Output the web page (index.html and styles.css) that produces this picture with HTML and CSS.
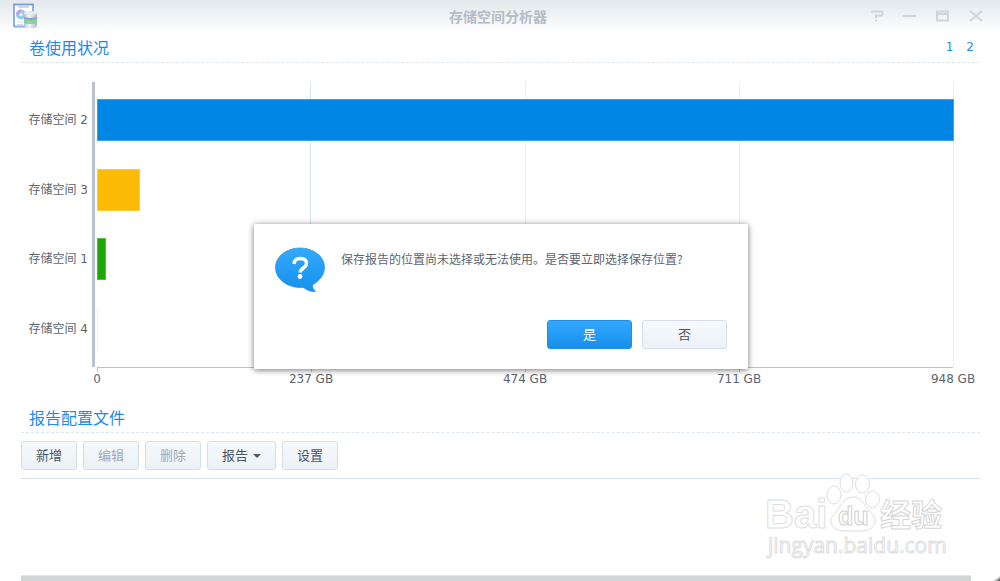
FILE: index.html
```html
<!DOCTYPE html>
<html lang="zh-CN">
<head>
<meta charset="utf-8">
<title>存储空间分析器</title>
<link rel="stylesheet" href="styles.css">
</head>
<body>
<div class="window">
  <header class="titlebar">
    <svg class="app-icon" viewBox="0 0 26 26" aria-hidden="true">
      <defs>
        <linearGradient id="disk" x1="0" x2="1" y1="0" y2="0"><stop offset="0" stop-color="#b9c3cd"/><stop offset=".4" stop-color="#f4f6f8"/><stop offset="1" stop-color="#aeb8c2"/></linearGradient>
      </defs>
      <rect x="1" y="1" width="19" height="22" fill="#fff"/>
      <path d="M1 1v23M20 1v20M1 23.500h19" fill="none" stroke="#8fb0e2" stroke-width="2"/>
      <path d="M0 1.500h21" stroke="#7aa0dc" stroke-width="2"/>
      <path d="M5 4h11" stroke="#c9ced6" stroke-width="1.500"/>
      <circle cx="8" cy="11.500" r="5" fill="#8ccdf2"/>
      <path d="M8 11.500H3A5 5 0 0 1 8 6.500z" fill="#c09ae6"/>
      <circle cx="8" cy="11.500" r="1.500" fill="#fff"/>
      <path d="M4 19h6M4 21.500h6" stroke="#d5d9df"/>
      <path d="M11 10v13c0 3 13 3 13 0V10z" fill="url(#disk)"/>
      <ellipse cx="17.500" cy="10" rx="6.500" ry="2" fill="#e8ecef"/>
      <path d="M11 14q6.500 2 13 0v2q-6.500 2-13 0z" fill="#879bd6"/>
      <path d="M11 16q6.500 2 13 0v2.500q-6.500 2-13 0z" fill="#97d06c"/>
      <path d="M11 18.500q6.500 2 13 0v1.500q-6.500 2-13 0z" fill="#6fc7e8"/>
    </svg>
    <h1 class="title">存储空间分析器</h1>
    <div class="controls">
      <button class="control" aria-label="帮助"><svg viewBox="0 0 14 14"><path d="M1 2.500h10q1.500 0 1.500 2t-1.500 2H6v2.500M6 10.500v2"/></svg></button>
      <button class="control" aria-label="最小化"><svg viewBox="0 0 14 14"><path d="M0 7h13"/></svg></button>
      <button class="control" aria-label="最大化"><svg viewBox="0 0 14 14"><path d="M1 2.500h11v9H1zM1 5h11"/></svg></button>
      <button class="control" aria-label="关闭"><svg viewBox="0 0 14 14"><path d="M1 2l12 10M13 2L1 12"/></svg></button>
    </div>
  </header>
  <main class="content">
    <section class="usage">
      <div class="section-head">
        <h2 class="section-title">卷使用状况</h2>
        <nav class="pager"><a href="#p1">1</a><a href="#p2">2</a></nav>
      </div>
      <div class="chart">
        <div class="y-labels"><span>存储空间 2</span><span>存储空间 3</span><span>存储空间 1</span><span>存储空间 4</span></div>
        <div class="plot">
          <div class="grid-lines"><i></i><i></i><i></i><i></i></div>
          <div class="bars">
            <div class="bar blue" style="width:100%"></div>
            <div class="bar yellow" style="width:5%"></div>
            <div class="bar green" style="width:1%"></div>
            <div class="bar pink" style="width:0.1%"></div>
          </div>
        </div>
        <div class="x-axis">
          <div class="x-labels"><span>0</span><span>237 GB</span><span>474 GB</span><span>711 GB</span><span>948 GB</span></div>
        </div>
      </div>
    </section>
    <section class="profiles">
      <div class="section-head">
        <h2 class="section-title">报告配置文件</h2>
      </div>
      <div class="toolbar">
        <button class="btn">新增</button>
        <button class="btn" disabled>编辑</button>
        <button class="btn" disabled>删除</button>
        <button class="btn">报告<span class="caret"></span></button>
        <button class="btn">设置</button>
      </div>
    </section>
    <div class="scroll-edge"></div>
  </main>
  <div class="dialog" role="dialog" aria-labelledby="message">
    <div class="dialog-body">
      <svg class="bubble" viewBox="0 0 52 46" aria-hidden="true">
        <defs><linearGradient id="blue" x1="0" x2="0" y1="0" y2="1"><stop offset="0" stop-color="#34a9ff"/><stop offset="1" stop-color="#1690ea"/></linearGradient></defs>
        <path d="M26 1C39.500 1 50.500 9.500 50.500 20.500c0 7-4.500 13-12 17.500 0 3 1 4.500 3 6.500-5 .5-8.500-1.500-12-4C14 41.500 1.500 32.500 1.500 20.500 1.500 9.500 12.500 1 26 1z" fill="url(#blue)" stroke="#2390e2" stroke-width=".7"/>
        <path d="M20 17c.3-4 2.700-5.500 6.300-5.500 3.700 0 6.200 1.800 6.200 5 0 4.500-6.300 4.500-6.300 9" fill="none" stroke="#fff" stroke-width="3.400"/>
        <circle cx="26" cy="29.500" r="2.400" fill="#fff"/>
      </svg>
      <p class="message" id="message">保存报告的位置尚未选择或无法使用。是否要立即选择保存位置?</p>
    </div>
    <div class="dialog-actions">
      <button class="btn primary">是</button>
      <button class="btn">否</button>
    </div>
  </div>
  <svg class="watermark" viewBox="0 0 190 100" role="img" aria-label="Baidu 经验 jingyan.baidu.com">
    <g class="mark">
      <ellipse cx="74" cy="30" rx="7" ry="9"/>
      <ellipse cx="86.500" cy="18" rx="6.500" ry="9"/>
      <ellipse cx="102.500" cy="19" rx="7" ry="9"/>
      <ellipse cx="112.500" cy="34.500" rx="7" ry="8.500"/>
      <path d="M93 32c7 0 10 5 14 11 5 6 9 9 8 14-2 10-12 9-22 9s-20 1-22-9c-1-5 4-8 8-14 4-6 7-11 14-11z"/>
      <text class="wm-latin" x="5" y="63">Bai</text>
      <text class="wm-du" x="78" y="60">du</text>
      <text class="wm-cjk" x="120" y="61">经验</text>
      <text class="wm-url" x="8" y="88">jingyan.baidu.com</text>
    </g>
  </svg>
  <div class="corner"></div>
</div>
</body>
</html>
```
FILE: styles.css
```css
* { box-sizing: border-box; }
html, body { height: 100%; }
body {
  margin: 0;
  background: #fff;
  color: #5c656e;
  font: 12px/18px "DejaVu Sans", "Noto Sans CJK SC", sans-serif;
  overflow: hidden;
}
.window {
  position: relative;
  display: flex;
  flex-direction: column;
  min-height: 100%;
}
.titlebar {
  display: grid;
  grid-template-columns: 1fr auto 1fr;
  align-items: center;
  height: 33px;
  padding: 0 17px 2px 13px;
  background: linear-gradient(#e2e8ec, #fff);
}
.app-icon { width: 26px; height: 26px; }
.title {
  margin: 0;
  font: bold 14px/20px "Noto Sans CJK SC", sans-serif;
  color: #b4bcc4;
}
.controls { display: flex; justify-content: flex-end; gap: 19px; }
.control {
  display: flex;
  width: 14px;
  height: 14px;
  padding: 0;
  border: 0;
  background: none;
}
.control svg {
  width: 14px;
  height: 14px;
  fill: none;
  stroke: #d0d4d7;
  stroke-width: 2;
}
.content {
  flex: 1;
  display: flex;
  flex-direction: column;
  padding: 0 20px 0 21px;
}
.section-head {
  display: flex;
  justify-content: space-between;
  align-items: center;
  height: 30px;
  padding: 0 6px 2px 8px;
  border-bottom: 1px dashed #dce6ef;
}
.section-title {
  margin: 0;
  font: 400 16px/24px "Noto Sans CJK SC", sans-serif;
  color: #1f8be6;
}
.pager { display: flex; gap: 13px; }
.pager a { color: #1f8be6; text-decoration: none; }
.chart {
  display: grid;
  grid-template: 285px 28px / 71px 1fr;
  padding: 19px 27px 0 0;
}
.y-labels {
  display: grid;
  grid-template-rows: repeat(4, 1fr);
  align-items: center;
  justify-items: end;
  padding: 3px 4px 3px 0;
}
.plot {
  display: grid;
  border-left: 3px solid #b9c0cf;
  padding-left: 2px;
}
.grid-lines, .bars { grid-area: 1 / 1; margin-right: -1px; }
.grid-lines { display: grid; grid-template-columns: repeat(4, 1fr); }
.grid-lines i { border-right: 1px solid #e6eef8; }
.grid-lines i:first-child { border-right-color: #d5e5f5; }
.bars {
  display: grid;
  grid-template-rows: repeat(4, 1fr);
  align-items: center;
  padding: 3px 0;
}
.bar { height: 42px; border: 1px solid; }
.blue { background: #0086e5; border-color: #3da2eb; }
.yellow { background: #fbba03; border-color: #fccb42; }
.green { background: #1ea602; border-color: #56bc41; }
.pink { width: 1px; border: 0; background: #f6edf2; }
.x-axis {
  grid-column: 2;
  margin-left: 5px;
  border-top: 1px solid #b9c3d0;
  background: repeating-linear-gradient(to right, #b9c3d0 0 1px, transparent 1px 25%) 0 0 / 100% 4px no-repeat;
}
.x-labels {
  display: flex;
  justify-content: space-between;
  margin: 2px -30px 0;
}
.x-labels span { width: 60px; text-align: center; white-space: nowrap; }
.profiles { margin-top: 8px; }
.toolbar {
  display: flex;
  gap: 6px;
  padding: 8px 0;
  border-bottom: 1px solid #d5e2ee;
}
.btn {
  display: flex;
  align-items: center;
  justify-content: center;
  min-width: 56px;
  height: 29px;
  padding: 0 14px 2px;
  border: 1px solid #d5dde6;
  border-radius: 3px;
  background: linear-gradient(#f6fafd, #ebf1f6);
  color: #4c565f;
  font: 13px/20px "Noto Sans CJK SC", sans-serif;
}
.btn:disabled { color: #a2aab5; }
.caret {
  margin: 3px 0 0 5px;
  border: 4px solid transparent;
  border-top-color: #505a64;
  border-bottom: 0;
}
.scroll-edge {
  height: 6px;
  margin: auto 9px 0 0;
  border-top: 1px solid #e4e5e6;
  background: #d3d4d6;
}
.dialog {
  position: absolute;
  top: 224px;
  left: calc(50% - 246px);
  width: 494px;
  padding: 23px 21px 20px 20px;
  background: #fff;
  box-shadow: 0 1px 6px rgba(0, 0, 0, .55);
}
.dialog-body { display: flex; gap: 15px; }
.bubble { width: 52px; height: 46px; flex: none; }
.message {
  margin: 2px 0 0;
  font: 12px/20px "Noto Sans CJK SC", sans-serif;
}
.dialog-actions {
  display: flex;
  justify-content: flex-end;
  gap: 10px;
  margin-top: 27px;
}
.dialog-actions .btn { width: 85px; }
.btn.primary {
  border-color: #228fe2;
  background: linear-gradient(#32a7ff, #178fe8);
  color: #fff;
}
.watermark {
  position: absolute;
  right: 50px;
  bottom: 16px;
  width: 190px;
  height: 100px;
  overflow: visible;
}
.mark { fill: #fff; stroke: #dedede; stroke-width: 1; }
.wm-latin { font: bold 40px "Liberation Sans", sans-serif; }
.wm-du { font: bold 25px "Liberation Sans", sans-serif; stroke: #cfcfcf; }
.wm-cjk { font: bold 31px "Noto Sans CJK SC", sans-serif; stroke: #d6d6d6; }
.wm-url { font: 21px "Open Sans", sans-serif; }
.corner {
  position: absolute;
  right: 0;
  bottom: 0;
  width: 7px;
  height: 5px;
  background: linear-gradient(to bottom right, transparent 45%, #33373b);
}
```
